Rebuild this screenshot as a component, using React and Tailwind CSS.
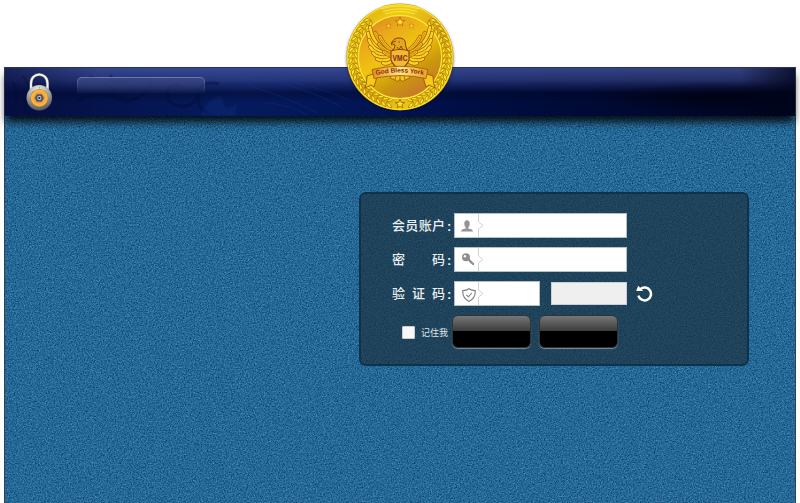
import React from "react";

function Grain() {
  return (
    <svg className="absolute inset-0 h-full w-full" aria-hidden="true">
      <filter id="grain" x="0" y="0" width="100%" height="100%" colorInterpolationFilters="sRGB">
        <feTurbulence type="fractalNoise" baseFrequency="0.87 0.79" numOctaves="3" seed="12" result="a" />
        <feTurbulence type="fractalNoise" baseFrequency="0.53 0.59" numOctaves="2" seed="31" result="b" />
        <feComposite in="a" in2="b" operator="arithmetic" k2="0.6" k3="0.4" />
        <feColorMatrix values="0.3 0.3 0 0 -0.153  0.4 0.4 0 0 0.006  0.4 0.4 0 0 0.186  0 0 0 0 1" />
      </filter>
      <rect width="100%" height="100%" filter="url(#grain)" />
    </svg>
  );
}

function Padlock() {
  return (
    <svg width="28" height="38" viewBox="0 0 28 38" className="shrink-0">
      <defs>
        <radialGradient id="steel" cx=".45" cy=".2" r=".85">
          <stop offset="0" stopColor="#ededed" />
          <stop offset=".55" stopColor="#9c9c9c" />
          <stop offset="1" stopColor="#4b4b50" />
        </radialGradient>
        <radialGradient id="amber">
          <stop offset="0" stopColor="#f39a4c" />
          <stop offset=".6" stopColor="#f3a448" />
          <stop offset="1" stopColor="#ffbd3b" />
        </radialGradient>
      </defs>
      <path d="M6 18V10.500c0-12 16.500-12 16.500 0V18" fill="none" stroke="#777b80" strokeWidth="3" />
      <path d="M6 18V10.500c0-12 16.500-12 16.500 0V18" fill="none" stroke="#f4f4ee" strokeWidth="1.900" />
      <circle cx="14.300" cy="24.800" r="12.800" fill="url(#steel)" />
      <circle cx="14.300" cy="25" r="9.100" fill="#a87530" />
      <circle cx="14.300" cy="25" r="8.500" fill="url(#amber)" />
      <path d="M9.700 25l2.200-3.800h4.800l2.200 3.800-2.200 3.800h-4.800z" fill="#55504c" stroke="#8d765f" strokeWidth=".6" />
      <circle cx="14.300" cy="25" r="2.200" fill="#a9bcc9" />
      <circle cx="14.300" cy="25" r="1.100" fill="#26313b" />
      <path d="M14.300 13.500v2.300" stroke="#c98b5e" strokeWidth=".8" />
    </svg>
  );
}

const STAR5 = "M0-5L1.2-1.6 4.8-1.5 1.9.6 2.9 4 0 2 -2.9 4 -1.9.6 -4.8-1.5 -1.2-1.6z";

const FEATHERS = [
  "M-13-5Q-28-15-30-30",
  "M-13-4Q-30-12-32-24",
  "M-12-3Q-28-7-31-17",
  "M-12-1Q-26-3-30-10",
  "M-11 0Q-22 2-27-4",
  "M-10 2Q-18 5-23 2",
  "M-8 4Q-13 8-17 6",
];

const COVERTS = ["M-10-6Q-20-14-25-24", "M-9-7Q-16-12-20-20", "M-9-4Q-17-7-21-13", "M-8-1Q-13-2-16-5"];

function Wing() {
  return (
    <g fill="none" strokeLinecap="round">
      {FEATHERS.map((d) => (
        <g key={d}>
          <path d={d} stroke="#ad5f0c" strokeWidth="4" />
          <path d={d} stroke="#f6d222" strokeWidth="2.600" />
        </g>
      ))}
      {COVERTS.map((d) => (
        <g key={d}>
          <path d={d} stroke="#ad5f0c" strokeWidth="4.200" />
          <path d={d} stroke="#edbb1f" strokeWidth="2.800" />
          <path d={d} stroke="#b66a0b" strokeWidth=".8" strokeDasharray="1 1.500" />
        </g>
      ))}
    </g>
  );
}

const LEAF_ANGLES = [13, 19.6, 26.2, 32.8, 39.4, 46, 52.6, 59.2, 65.8, 72.4, 79, 85.6, 92.2, 98.8, 105.4, 112, 118.6, 125.2, 131.8, 138.4];

function Medal() {
  return (
    <svg width="116" height="116" viewBox="-58 -58 116 116">
      <defs>
        <linearGradient id="rim" x1="0" y1="0" x2=".8" y2="1">
          <stop offset="0" stopColor="#dba512" />
          <stop offset=".3" stopColor="#edcc16" />
          <stop offset=".6" stopColor="#dc9f17" />
          <stop offset="1" stopColor="#f0d812" />
        </linearGradient>
        <linearGradient id="face" x1=".1" y1="0" x2=".7" y2="1">
          <stop offset="0" stopColor="#d88020" />
          <stop offset=".25" stopColor="#eaa81c" />
          <stop offset=".5" stopColor="#efc410" />
          <stop offset=".75" stopColor="#ca980c" />
          <stop offset="1" stopColor="#c8742c" />
        </linearGradient>
        <linearGradient id="ribbon">
          <stop offset="0" stopColor="#dc9218" />
          <stop offset=".5" stopColor="#ffe98a" />
          <stop offset="1" stopColor="#e9a31d" />
        </linearGradient>
        <path id="motto" d="M-26 18.500Q0 12.500 26 18.500" />
      </defs>
      <circle cx="0" cy="1.500" r="53.500" fill="#07122a" className="blur-[1.5px]" opacity=".5" />
      <circle r="53.400" fill="#d29c10" />
      <circle r="52.300" fill="url(#rim)" stroke="#fbe02c" strokeWidth="1.200" />
      <g fill="none" stroke="#fff150" strokeWidth="1" opacity=".75">
        <path d="M-19-48Q0-54 19-48M-17-45.500Q0-51 17-45.500M-15-43Q0-48 15-43" />
      </g>
      {[1, -1].map((s) => (
        <g key={s} transform={`scale(${s} 1)`}>
          {LEAF_ANGLES.map((a) => (
            <g key={a} transform={`rotate(${180 - a}) translate(0 -46.800)`}>
              <path d="M-2.800-.3Q-1.800-5 3.200-4.600 2.200-.9-2.800-.3z" fill="#fff02a" stroke="#a8700d" strokeWidth=".7" />
              <path d="M-2.800.4Q-1.800 4.900 3.200 4.500 2.200.9-2.800.4z" fill="#fbe51c" stroke="#a8700d" strokeWidth=".7" />
            </g>
          ))}
        </g>
      ))}
      <circle r="41.700" fill="url(#face)" stroke="#ffeb35" strokeWidth="1.200" />
      <path d={STAR5} transform="translate(0 47)" fill="#ffe91e" stroke="#a3600b" strokeWidth=".8" />
      <g fill="#ffe427" stroke="#b05f10" strokeWidth=".7">
        <path d={STAR5} transform="translate(0 -35)" />
        <path d={STAR5} transform="translate(-11.500 -31) scale(.58)" />
        <path d={STAR5} transform="translate(11.500 -31) scale(.58)" />
      </g>
      <Wing />
      <g transform="scale(-1 1)"><Wing /></g>
      <path d="M-4 12l-6 9 4 1.500 3 2 3-2 3 2 3-2 4-1.500-6-9z" fill="#f4c51b" stroke="#9a500a" strokeWidth=".7" />
      <path d="M-3 15l-2 8M0 15v8M3 15l2 8" stroke="#9a500a" strokeWidth=".7" />
      <path d="M-8-5Q-5-9-5-12L-8.500-13.500Q-7-19-1-19 6-19 5.500-12 6-8 9-4L6 2H-6z" fill="#e5a81c" stroke="#84400a" strokeWidth="1" />
      <path d="M-4-16L-9-14-8-11.500M-1.500-15h1.500M-3-10l2 3 2-4 2 4" fill="none" stroke="#84400a" strokeWidth=".9" />
      <path d="M-9-6Q0-9 9-6V3Q7 9 0 12-7 9-9 3z" fill="#eebb35" stroke="#8c3d0a" strokeWidth="1.100" />
      <text x="0" y="3.500" textAnchor="middle" textLength="15" lengthAdjust="spacingAndGlyphs" className="fill-[#8c270b] font-['Liberation_Sans'] text-[9px] font-bold">VMC</text>
      <path d="M-27 17l-6 2q0 7-2 12l6-3 3 2q2-6 3-11zM27 17l6 2q0 7 2 12l-6-3-3 2q-2-6-3-11z" fill="#f5c91b" stroke="#9a520a" strokeWidth=".9" />
      <path d="M-28 12.500Q0 6 28 12.500L26 21.500Q0 15.500-26 21.500z" fill="url(#ribbon)" stroke="#a65c0c" strokeWidth=".9" />
      <text className="fill-[#8f2410] font-['Liberation_Sans'] text-[6.500px] font-bold">
        <textPath href="#motto" startOffset="2" textLength="48">God Bless York</textPath>
      </text>
    </svg>
  );
}

function HeaderBar() {
  return (
    <header className="relative flex h-[49px] border-t border-[#30343c] bg-linear-to-r from-[#06134a] via-[#00104b] to-[#00051f] shadow-[0_7px_8px_-1px_rgba(0,0,0,.85)]">
      <svg className="absolute inset-0 h-full w-full" viewBox="0 0 790 48" preserveAspectRatio="none" aria-hidden="true">
        <defs>
          <linearGradient id="sheen" x1="0" x2="0" y1="0" y2="1">
            <stop offset="0" stopColor="#4a5fae" stopOpacity=".68" />
            <stop offset=".25" stopColor="#3c4b92" stopOpacity=".58" />
            <stop offset=".42" stopColor="#1c2660" stopOpacity=".4" />
            <stop offset=".52" stopColor="#020620" stopOpacity=".35" />
            <stop offset=".7" stopColor="#000" stopOpacity="0" />
          </linearGradient>
          <linearGradient id="mid" x1="0" x2="1">
            <stop offset=".1" stopColor="#0c3088" stopOpacity="0" />
            <stop offset=".3" stopColor="#0c3088" stopOpacity=".3" />
            <stop offset=".58" stopColor="#0c3088" stopOpacity="0" />
          </linearGradient>
          <radialGradient id="dusk">
            <stop offset="0" stopColor="#000212" stopOpacity=".8" />
            <stop offset="1" stopColor="#000212" stopOpacity="0" />
          </radialGradient>
          <linearGradient id="leftdusk">
            <stop offset="0" stopColor="#040b3a" stopOpacity=".6" />
            <stop offset=".12" stopColor="#040b3a" stopOpacity="0" />
            <stop offset=".93" stopColor="#00041a" stopOpacity="0" />
            <stop offset="1" stopColor="#00041a" stopOpacity=".75" />
          </linearGradient>
        </defs>
        <rect width="790" height="48" fill="url(#mid)" />
        <rect width="790" height="48" fill="url(#sheen)" />
        <ellipse cx="712" cy="30" rx="120" ry="16" fill="url(#dusk)" />
        <rect width="790" height="48" fill="url(#leftdusk)" />
        <g fill="none" stroke="#030b32" strokeOpacity=".38" className="blur-[0.6px]">
          <path d="M72 33q22-12 38-3t31-7-14-11-20-5" strokeWidth="2.500" />
          <path d="M84 9q18 3 24 14t26 7" strokeWidth="2" />
          <path d="M178 20q-12-8-15 4t12 14 17-12 22-10M195 26q-6 13 9 20" strokeWidth="3" />
          <path d="M18 8q10 12 4 22t3 16M8 14q6 10 2 26" strokeWidth="2" />
        </g>
        <g fill="none" stroke="#1a3d96" strokeOpacity=".25" strokeWidth="1.200">
          <path d="M248 8q55 12 90 32M242 17q42 13 70 28M260 35q20 0 42 12M270 12q40 5 74 20" />
        </g>
        <path d="M196 48q2-12 12-16 8-8 10 2t14 2l-2 12z" fill="#123a91" opacity=".25" className="blur-[1px]" />
      </svg>
      <div className="relative flex items-start pt-[5px] pl-[20px]">
        <Padlock />
        <div className="mt-[4px] ml-[24px] h-[17px] w-[128px] rounded-t-[5px] bg-linear-to-b from-[#98a6d0]/60 to-transparent p-px">
          <div className="h-full rounded-t-[4px] bg-linear-to-b from-[#2e3d7c]/85 to-[#0b1649]/50" />
        </div>
      </div>
    </header>
  );
}

function UserIcon() {
  return (
    <svg width="12" height="12" viewBox="0 0 12 12" fill="#949494" className="mt-[1px] ml-[1px]">
      <ellipse cx="6" cy="3.800" rx="2.700" ry="3.600" />
      <path d="M4.700 6h2.600v2.400q4.700.6 4.700 3H0q0-2.400 4.700-3z" />
    </svg>
  );
}

function KeyIcon() {
  return (
    <svg width="14" height="13" viewBox="0 0 14 13" className="ml-[3px]">
      <circle cx="5" cy="4.300" r="4" fill="#8e8e8e" />
      <circle cx="3.900" cy="3.200" r="1.200" fill="#fff" />
      <path d="M7 6l5.200 5" stroke="#8e8e8e" strokeWidth="2.200" strokeLinecap="round" />
      <path d="M9 10l1.400-1.200" stroke="#8e8e8e" strokeWidth="1.200" />
    </svg>
  );
}

function ShieldIcon() {
  return (
    <svg width="14" height="14" viewBox="0 0 14 14" fill="none" stroke="#7d7d7d" strokeWidth="1.100" className="mt-[3px] ml-[5px] shrink-0">
      <path d="M7 .8Q9.500 2.600 13.200 2.600 13.800 10 7 13.400.2 10 .8 2.600 4.500 2.600 7 .8z" />
      <path d="M4.400 6.800l2 2L9.800 5" />
    </svg>
  );
}

function Field({ icon, className }) {
  return (
    <div className={`flex h-[25px] shrink-0 border border-[#b4c0c8] bg-white ${className}`}>
      <div className="flex w-[23px] items-center justify-center">{icon}</div>
      <svg width="6" height="23" viewBox="0 0 6 23" fill="none" stroke="#d2d2d2" strokeWidth="1">
        <path d="M.5 0v8L5 11.500.5 15v8" />
      </svg>
      <input className="min-w-0 flex-1 bg-transparent text-xs outline-none" />
    </div>
  );
}

function Label({ chars }) {
  return (
    <div className="mt-px flex w-[62px] shrink-0 text-[13px] leading-[24px] font-medium text-[#eceff1]">
      <div className="flex w-[53px] justify-between">
        {chars.map((c) => <span key={c}>{c}</span>)}
      </div>
      <span className="mt-px ml-[2px] font-bold">:</span>
    </div>
  );
}

function GlossButton() {
  return (
    <button className="h-[33px] w-[79px] rounded-[6px] border-[1.5px] border-[#303236] bg-linear-to-b from-[#777] from-0% via-[#3d3d3d] via-48% to-black to-48% shadow-[0_1px_1px_#7c8c98]" />
  );
}

function LoginPanel() {
  return (
    <form className="relative mt-[76px] ml-[354px] flex h-[174px] w-[390px] flex-col rounded-[7px] border-2 border-[#0c2c43]/90 bg-[#1c2f3c]/65 bg-clip-padding pt-[19px] pl-[31px]">
      <div className="flex h-[34px] items-start"><Label chars={["会", "员", "账", "户"]} /><Field icon={<UserIcon />} className="w-[173px]" /></div>
      <div className="flex h-[34px] items-start"><Label chars={["密", "码"]} /><Field icon={<KeyIcon />} className="w-[173px]" /></div>
      <div className="flex h-[34px] items-start">
        <Label chars={["验", "证", "码"]} />
        <Field icon={<ShieldIcon />} className="w-[86px]" />
        <div className="mt-[1px] ml-[11px] h-[23px] w-[76px] border border-[#ccd0d4] bg-[#efeff0]" />
        <svg width="17" height="17" viewBox="0 0 17 17" fill="none" className="mt-[4px] ml-[9px]">
          <path d="M4.300 4.200A6.400 6.400 0 1 1 2.400 10.600" stroke="#fff" strokeWidth="2.500" />
          <path d="M.2 6L2.200.8 7.200 6z" fill="#fff" />
        </svg>
      </div>
      <div className="flex items-start">
        <div className="mt-[11px] ml-[10px] h-[13px] w-[13px] rounded-[1px] border border-[#c9cccf] bg-[#f7f7f7]" />
        <span className="mt-[12px] ml-[6px] w-[31px] text-[9px] leading-[13px] whitespace-nowrap text-[#dfe4e8]">记住我</span>
        <GlossButton />
        <div className="ml-[8px]"><GlossButton /></div>
      </div>
    </form>
  );
}

export default function App() {
  return (
    <div className="relative h-[503px] w-[800px] overflow-hidden bg-white pt-[67px] font-['Liberation_Sans','Noto_Sans_CJK_SC',sans-serif]">
      <main className="relative ml-[4px] h-[436px] w-[792px] border-x border-[#34404a]">
        <div className="absolute inset-0 overflow-hidden"><Grain /></div>
        <HeaderBar />
        <LoginPanel />
      </main>
      <div className="absolute top-[-1px] left-[342px]"><Medal /></div>
    </div>
  );
}
